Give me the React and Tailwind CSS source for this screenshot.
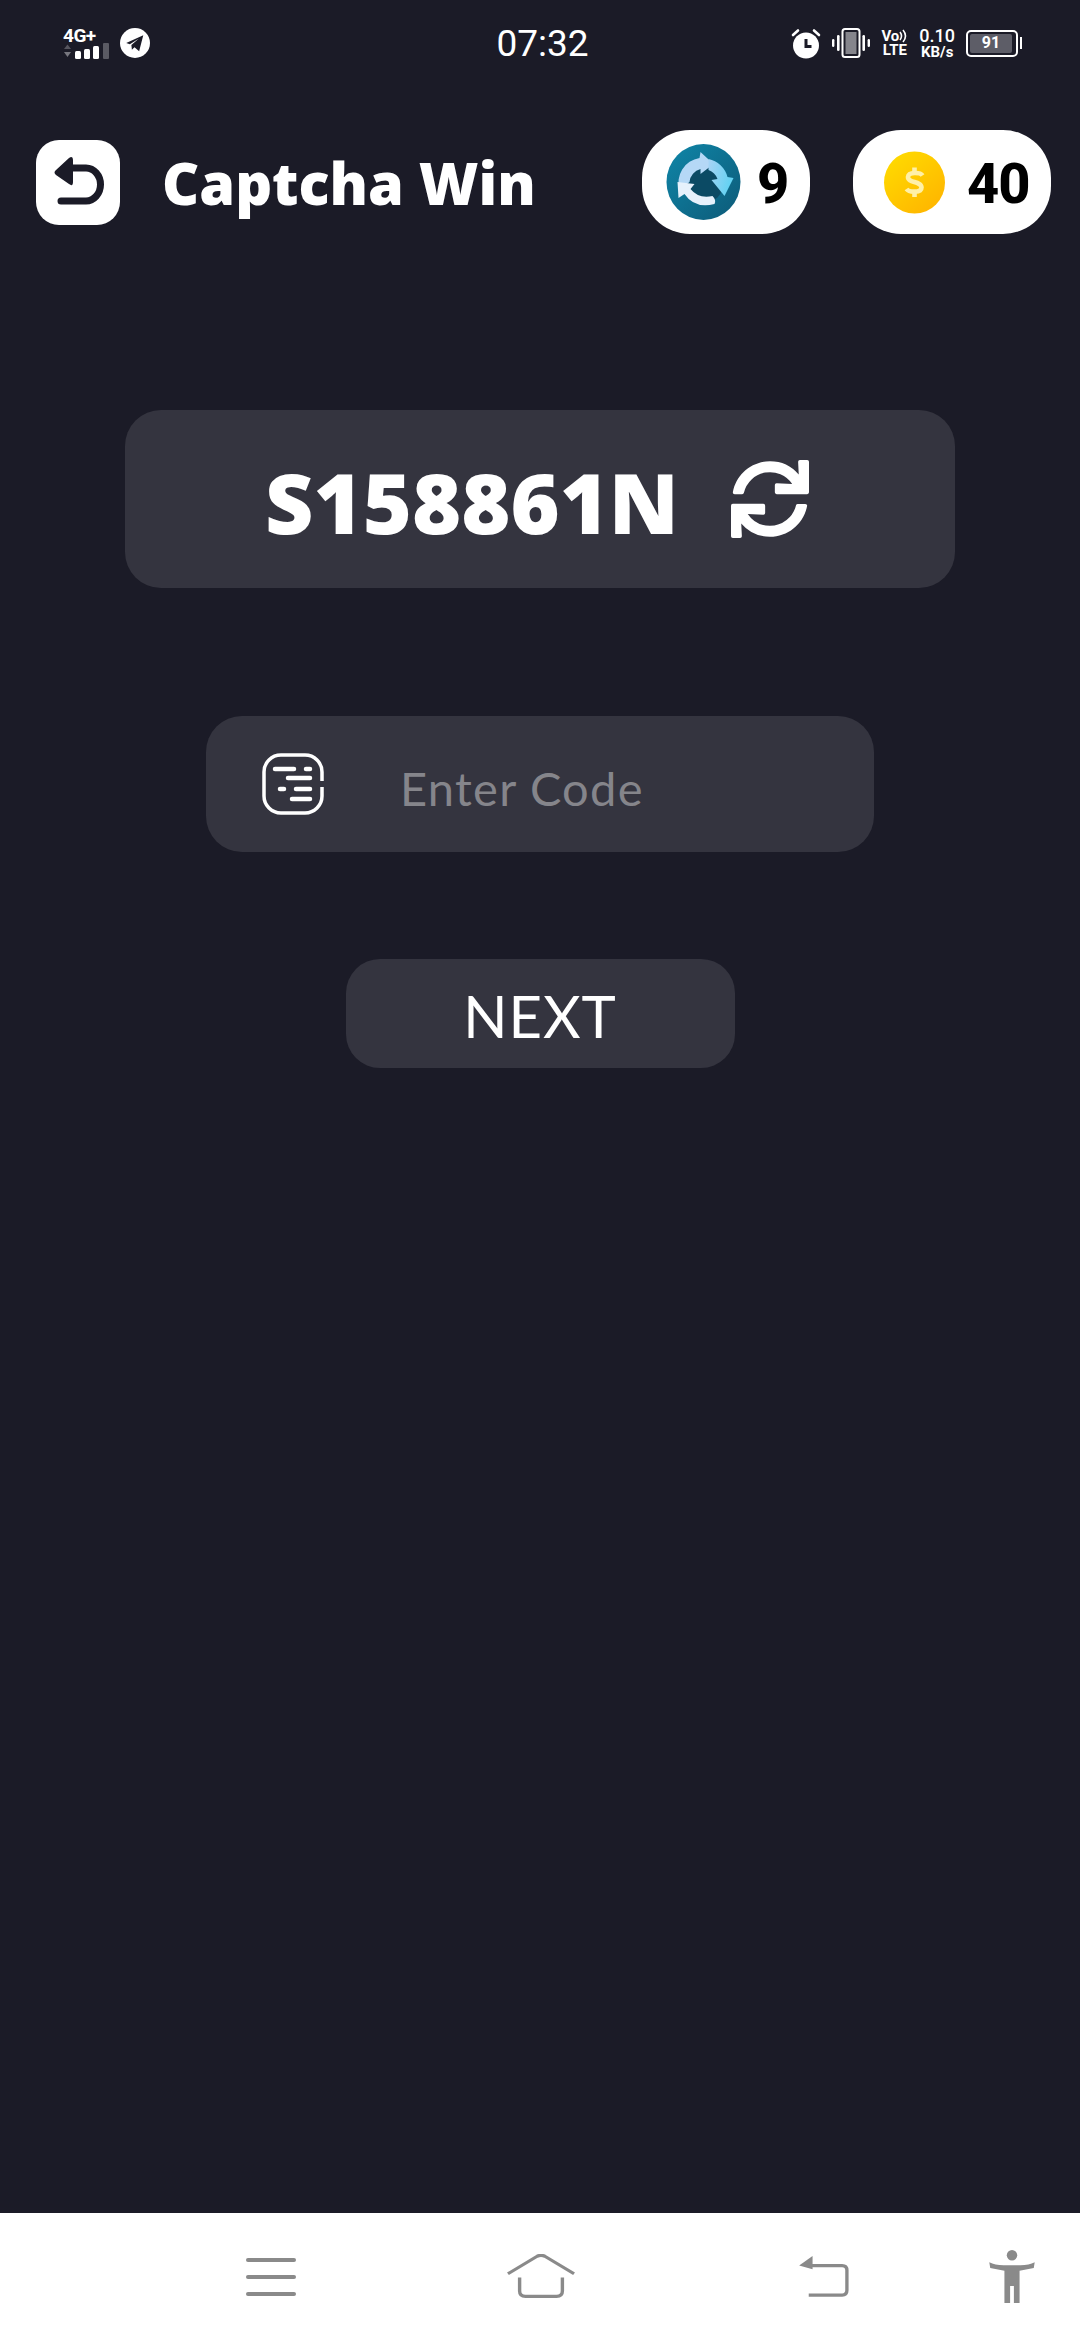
import React from "react";
import { FaSync } from "react-icons/fa";

const open = { fontFamily: '"Open Sans", sans-serif' };

function Telegram() {
  return (
    <svg width="30" height="30" viewBox="0 0 29 29">
      <circle cx="14.5" cy="14.5" r="14.5" fill="#fff" />
      <path d="M6 14.5 L22.5 7 L18.5 22.5 L14 18.5 L11.5 21 L11 16.5 L18 10.5 L9.5 15.8 Z" fill="#1b1b27" />
    </svg>
  );
}

function Signal() {
  return (
    <svg width="48" height="16" viewBox="0 0 48 16">
      <path d="M1 6 L4.5 1.5 L8 6 Z" fill="#55555e" />
      <path d="M1 9 L8 9 L4.5 14 Z" fill="#77777f" />
      <rect x="12" y="8" width="6" height="8" rx="1.5" fill="#fff" />
      <rect x="21" y="6" width="6" height="10" rx="1.5" fill="#fff" />
      <rect x="30" y="3" width="6" height="13" rx="1.5" fill="#fff" />
      <rect x="40" y="0" width="6" height="16" rx="1" fill="#5a5a63" />
    </svg>
  );
}

function Alarm() {
  return (
    <svg width="30" height="31" viewBox="0 0 30 31">
      <circle cx="15" cy="17.5" r="13" fill="#fff" />
      <path d="M2 7 L7 2.5 M28 7 L23 2.5" stroke="#fff" strokeWidth="2.6" strokeLinecap="round" />
      <path d="M15 11 V18.5 H20.5" stroke="#1b1b27" strokeWidth="3" fill="none" />
    </svg>
  );
}

function Vibrate() {
  return (
    <svg width="38" height="30" viewBox="0 0 38 30">
      <rect x="10.5" y="1" width="17" height="28" rx="2.5" fill="none" stroke="#fff" strokeWidth="2" />
      <rect x="13.5" y="4" width="11" height="22" fill="#85858c" />
      <rect x="5" y="7" width="2.6" height="16" rx="1.3" fill="#fff" />
      <rect x="30.4" y="7" width="2.6" height="16" rx="1.3" fill="#fff" />
      <rect x="0" y="11" width="2.4" height="8" rx="1.2" fill="#fff" />
      <rect x="35.6" y="11" width="2.4" height="8" rx="1.2" fill="#fff" />
    </svg>
  );
}

function VoWaves() {
  return (
    <svg width="9" height="14" viewBox="0 0 9 14" fill="none" stroke="#fff" strokeWidth="1.6">
      <path d="M1 3 Q4 7 1 11" />
      <path d="M4 1 Q9 7 4 13" />
    </svg>
  );
}

function BackIcon() {
  return (
    <svg width="84" height="85" viewBox="0 0 84 85" className="shrink-0">
      <rect width="84" height="85" rx="23" fill="#fff" />
      <path d="M35 28 H50 A14.5 16.5 0 0 1 50 61 H25" fill="none" stroke="#1b1b27" strokeWidth="7" strokeLinecap="round" />
      <path d="M33 18 Q37 15.5 37 20 V42 Q37 47 33 44 L20 35 Q17 32.5 20 30 Z" fill="#1b1b27" />
    </svg>
  );
}

function RecycleCoin() {
  return (
    <svg width="75" height="76" viewBox="0 0 74 76" className="shrink-0">
      <defs>
        <linearGradient id="tealBg" x1="0" y1="0" x2="1" y2="1">
          <stop offset="0" stopColor="#0f86a8" />
          <stop offset="1" stopColor="#0d5a78" />
        </linearGradient>
        <linearGradient id="arrowTop" x1="0" y1="0" x2="1" y2="0.4">
          <stop offset="0" stopColor="#a9d4f5" />
          <stop offset="1" stopColor="#62d2f2" />
        </linearGradient>
      </defs>
      <ellipse cx="37" cy="38" rx="37" ry="38" fill="url(#tealBg)" />
      <circle cx="37" cy="39" r="20" fill="#0b4a64" />
      <path d="M13 46 A25 25 0 0 1 33 14 L34 8 L47 20 L34 30 L34 25 A15 15 0 0 0 23 38 Z" fill="#b5d8f6" />
      <path d="M42 15 A25 25 0 0 1 61 33 L67 34 L58 52 L45 36 L51 35 A15 15 0 0 0 42 26 Z" fill="url(#arrowTop)" />
      <path d="M48 60 Q28 65 18 50 L12 54 L11 38 L28 40 L24 45 Q32 55 46 52 Q50 56 48 60 Z" fill="#e6f1fc" />
    </svg>
  );
}

function DollarCoin() {
  return (
    <svg width="63" height="63" viewBox="0 0 62 63" className="shrink-0">
      <defs>
        <linearGradient id="gold" x1="0.1" y1="0" x2="0.9" y2="1">
          <stop offset="0" stopColor="#ffdc00" />
          <stop offset="1" stopColor="#ffb300" />
        </linearGradient>
      </defs>
      <ellipse cx="31" cy="31.5" rx="30.5" ry="31" fill="url(#gold)" />
      <path d="M39 24.5 C37 21.5 25 20.5 24.5 26 C24 32 38 30 38 36.5 C38 42 25.5 41.5 23 38" fill="none" stroke="#fff0a8" strokeWidth="4.6" />
      <path d="M31 16.5 V21 M31 41 V46" stroke="#fff0a8" strokeWidth="4.6" />
    </svg>
  );
}

function CodeIcon() {
  return (
    <svg width="62" height="62" viewBox="0 0 62 62">
      <path d="M60 28 V19 A17 17 0 0 0 43 2 H19 A17 17 0 0 0 2 19 V43 A17 17 0 0 0 19 60 H43 A17 17 0 0 0 60 43 V34" fill="none" stroke="#fff" strokeWidth="3.5" />
      <g stroke="#fff" strokeWidth="4.5" strokeLinecap="round">
        <path d="M13 16 H32 M44 16 H48 M26 25 H48 M18 36 H22 M34 36 H48 M30 46 H48" />
      </g>
    </svg>
  );
}

function HomeIcon() {
  return (
    <svg width="70" height="45" viewBox="0 0 72 50" preserveAspectRatio="none" fill="none" stroke="#8a8a8a" strokeWidth="3.5">
      <path d="M2 22 L32 2.5 Q36 0.5 40 2.5 L70 22" />
      <path d="M14 26 V41 Q14 47 20 47 H52 Q58 47 58 41 V26" />
    </svg>
  );
}

function ReturnIcon() {
  return (
    <svg width="52" height="42" viewBox="0 0 52 44" fill="none">
      <path d="M10 10 H45 Q50 10 50 15 V36 Q50 41 45 41 H10" stroke="#8a8a8a" strokeWidth="3.5" />
      <path d="M0 10 L14 0 V14 Z" fill="#8a8a8a" />
    </svg>
  );
}

function PersonIcon() {
  return (
    <svg width="48" height="53" viewBox="0 0 48 56" fill="#8a8a8a">
      <ellipse cx="24" cy="5.5" rx="5.5" ry="5.5" />
      <path d="M0 13 Q6 16 15 16 H33 Q42 16 48 13 L47 19 L32 22 V56 H26 V38 H22 V56 H16 V22 L1 19 Z" />
    </svg>
  );
}

export default function App() {
  return (
    <div className="flex flex-col h-[2340px] w-[1080px] bg-[#1b1b27] overflow-hidden" style={{ fontFamily: 'Roboto, sans-serif' }}>
      <div className="flex items-center h-[84px] text-white pt-[2px]">
        <div className="flex-1 flex items-center pl-[63px] gap-[7px]">
          <div className="flex flex-col w-[50px]">
            <span className="text-[19px] font-bold leading-[15px] tracking-[-0.5px]">4G+</span>
            <Signal />
          </div>
          <Telegram />
        </div>
        <div className="text-[37px] leading-none">07:32</div>
        <div className="flex-1 flex items-center justify-end pr-[58px]">
          <Alarm />
          <div className="ml-[11px]"><Vibrate /></div>
          <div className="ml-[11px] flex flex-col items-center font-bold text-[15px] leading-[14px]">
            <span className="flex items-center">Vo<VoWaves /></span>
            <span className="text-[15px]">LTE</span>
          </div>
          <div className="ml-[11px] flex flex-col items-center font-medium leading-none">
            <span className="text-[18px]">0.10</span>
            <span className="text-[15px] font-bold">KB/s</span>
          </div>
          <div className="ml-[11px] flex items-center">
            <div className="w-[52px] h-[27px] border-2 border-white rounded-[5px] p-[2px] flex">
              <div className="w-[42px] h-full bg-[#5d5d67] rounded-[2px] flex items-center justify-center text-[16px] font-bold leading-none">91</div>
            </div>
            <div className="w-[2px] h-[12px] bg-white ml-[2px]" />
          </div>
        </div>
      </div>

      <div className="flex items-center h-[104px] mt-[46px] pl-[36px] pr-[29px]">
        <BackIcon />
        <div className="flex-1 ml-[42px] mt-[3px] text-white text-[57.5px] font-extrabold leading-none" style={open}>Captcha Win</div>
        <div className="flex items-center w-[168px] h-full bg-white rounded-[48px] pl-[24px] text-[56px] font-extrabold text-black leading-none">
          <RecycleCoin />
          <span className="ml-[16px] mt-[3px]">9</span>
        </div>
        <div className="flex items-center w-[198px] h-full ml-[43px] bg-white rounded-[48px] pl-[30px] text-[56px] font-extrabold text-black leading-none tracking-[-1px]">
          <DollarCoin />
          <span className="ml-[21px] mt-[3px]">40</span>
        </div>
      </div>

      <div className="flex flex-col items-center">
        <div className="flex items-center justify-center gap-[52px] w-[830px] h-[178px] mt-[176px] pr-[6px] bg-[#34343f] rounded-[36px] text-white">
          <span className="text-[84px] font-extrabold leading-none mt-[6px]" style={open}>S158861N</span>
          <FaSync size={78} />
        </div>
        <div className="flex items-center w-[668px] h-[136px] mt-[128px] pl-[56px] bg-[#34343f] rounded-[36px]">
          <CodeIcon />
          <span className="ml-[76px] text-[47px] text-[#85858b] leading-none tracking-[1.3px] mt-[8px]" style={{ fontFamily: 'Lato, sans-serif' }}>Enter Code</span>
        </div>
        <div className="flex items-center justify-center w-[389px] h-[109px] mt-[107px] bg-[#34343f] rounded-[34px] text-white text-[58px] tracking-[1px] leading-none" style={{ fontFamily: 'Lato, sans-serif' }}>
          <span className="mt-[5px]">NEXT</span>
        </div>
      </div>

      <div className="mt-auto flex items-center h-[127px] bg-white">
        <div className="flex flex-col gap-[13px] ml-[246px] w-[50px]">
          <div className="h-[4px] rounded-full bg-[#8a8a8a]" />
          <div className="h-[4px] rounded-full bg-[#8a8a8a]" />
          <div className="h-[4px] rounded-full bg-[#8a8a8a]" />
        </div>
        <div className="ml-[210px]"><HomeIcon /></div>
        <div className="ml-[222px]"><ReturnIcon /></div>
        <div className="ml-[138px]"><PersonIcon /></div>
      </div>
    </div>
  );
}
